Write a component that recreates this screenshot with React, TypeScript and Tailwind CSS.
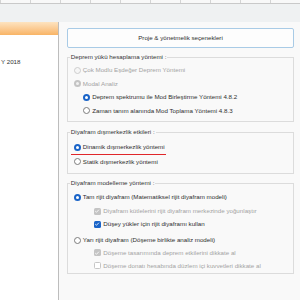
import React from "react";

type Kind = "radio" | "check";

interface OptionProps {
    kind: Kind;
    label: string;
    checked?: boolean;
    disabled?: boolean;
    indent?: string;
    className?: string;
}

const Radio = ({ checked, disabled }: { checked?: boolean; disabled?: boolean }) => {
    if (checked) {
        return (
            <span
                className={`flex h-[7px] w-[7px] shrink-0 items-center justify-center rounded-full ${
                    disabled ? "bg-[#c4c4c4]" : "bg-[#1a64c8]"
                }`}
            >
                <span className={`h-[3px] w-[3px] rounded-full ${disabled ? "bg-[#f1f1f1]" : "bg-white"}`} />
            </span>
        );
    }
    return (
        <span
            className={`h-[7px] w-[7px] shrink-0 rounded-full border ${
                disabled ? "border-[#cdcdcd] bg-[#f6f6f6]" : "border-[#7c7c7c] bg-white"
            }`}
        />
    );
};

const Check = ({ checked, disabled }: { checked?: boolean; disabled?: boolean }) => {
    if (!checked) {
        return <span className="h-[7px] w-[7px] shrink-0 rounded-[1.5px] border border-[#c6c6c6] bg-white" />;
    }
    return (
        <span
            className={`flex h-[7px] w-[7px] shrink-0 items-center justify-center rounded-[1.5px] ${
                disabled ? "bg-[#c4c4c4]" : "bg-[#1a64c8]"
            }`}
        >
            <svg viewBox="0 0 8 8" className="h-[6px] w-[6px]">
                <path d="M1.6 4.1 3.3 5.7 6.5 2.3" fill="none" stroke="white" strokeWidth="1.1" />
            </svg>
        </span>
    );
};

const Option = ({ kind, label, checked, disabled, indent = "", className = "h-[13.5px]" }: OptionProps) => (
    <div className={`flex items-center ${kind === "radio" ? "gap-[2px]" : "gap-[2.5px]"} ${indent} ${className}`}>
        {kind === "radio" ? <Radio checked={checked} disabled={disabled} /> : <Check checked={checked} disabled={disabled} />}
        <span className={`whitespace-nowrap leading-[8px] ${disabled ? "text-[#a3a3a3]" : "text-[#2e2e2e]"}`}>{label}</span>
    </div>
);

const App: React.FC = () => {
    return (
        <div className="flex h-[300px] w-[300px] flex-col overflow-hidden bg-[#eff1f2] font-['Liberation_Sans',sans-serif] text-[6.2px] text-[#333]">
            {/* column header strip */}
            <div className="flex h-[4px] shrink-0 border-b border-[#c9c9c9] bg-[#f8f8f8]">
                <div className="w-[20px] border-r border-[#d4d4d4]" />
                {[0, 1, 2, 3, 4, 5, 6, 7, 8, 9].map((i) => (
                    <div key={i} className="w-[30px] shrink-0 border-r border-[#d4d4d4]" />
                ))}
            </div>
            <div className="h-[18px] shrink-0" />

            <div className="flex min-h-0 flex-1">
                {/* left panel */}
                <div className="w-[59px] shrink-0 border-r border-[#bdbdbd] bg-white">
                    <div className="h-[13px] bg-linear-to-b from-[#fde3c0] to-[#f8b465]" />
                    <div className="mt-[22.5px] pl-[1px] leading-[8px] text-[#333]">Y 2018</div>
                </div>

                {/* right panel */}
                <div className="min-w-0 flex-1 bg-[#f9f9f9] pl-[8px] pr-[6px] pt-[5.5px]">
                    <button
                        type="button"
                        className="flex h-[20px] w-full items-center justify-center rounded-[2px] border border-[#a9cbe6] bg-[#fdfdfd] text-[6.2px] text-[#2e2e2e]"
                    >
                        Proje &amp; yönetmelik seçenekleri
                    </button>

                    <fieldset className="mt-[5.8px] border border-[#dcdcdc] pb-[3.5px] pl-[5.8px] pt-[2px]">
                        <legend className="-ml-[4px] px-[1px] leading-[8px] text-[#333]">Deprem yükü hesaplama yöntemi :</legend>
                        <Option kind="radio" disabled label="Çok Modlu Eşdeğer Deprem Yöntemi" />
                        <Option kind="radio" disabled checked label="Modal Analiz" />
                        <Option kind="radio" checked indent="ml-[9.4px]" label="Deprem spektrumu ile Mod Birleştirme Yöntemi 4.8.2" />
                        <Option kind="radio" indent="ml-[9.4px]" label="Zaman tanım alanında Mod Toplama Yöntemi 4.8.3" />
                    </fieldset>

                    <fieldset className="mt-[6.5px] border border-[#dcdcdc] pb-[5px] pl-[5.8px] pt-[4.5px]">
                        <legend className="-ml-[4px] px-[1px] leading-[8px] text-[#333]">Diyafram dışmerkezlik etkileri :</legend>
                        <Option
                            kind="radio"
                            checked
                            label="Dinamik dışmerkezlik yöntemi"
                            className="-ml-[3px] h-[14px] w-fit border-b-[1.3px] border-[#e0262a] pl-[3px] pr-[1.5px]"
                        />
                        <Option kind="radio" label="Statik dışmerkezlik yöntemi" />
                    </fieldset>

                    <fieldset className="mt-[5px] border border-[#dcdcdc] pb-[1px] pl-[5.8px] pt-[3.7px]">
                        <legend className="-ml-[4px] px-[1px] leading-[8px] text-[#333]">Diyafram modelleme yöntemi :</legend>
                        <Option kind="radio" checked label="Tam rijit diyafram (Matematiksel rijit diyafram modeli)" className="h-[13px]" />
                        <Option
                            kind="check"
                            checked
                            disabled
                            indent="ml-[20px]"
                            label="Diyafram kütlelerini rijit diyafram merkezinde yoğunlaştır"
                            className="mt-[1px] h-[13px]"
                        />
                        <Option kind="check" checked indent="ml-[20px]" label="Düşey yükler için rijit diyaframı kullan" className="h-[13px]" />
                        <Option kind="radio" label="Yarı rijit diyafram (Döşeme birlikte analiz modeli)" className="mt-[3px] h-[12.5px]" />
                        <Option
                            kind="check"
                            checked
                            disabled
                            indent="ml-[20px]"
                            label="Döşeme tasarımında deprem etkilerini dikkate al"
                            className="h-[13px]"
                        />
                        <Option
                            kind="check"
                            disabled
                            indent="ml-[20px]"
                            label="Döşeme donatı hesabında düzlem içi kuvvetleri dikkate al"
                            className="h-[13px]"
                        />
                    </fieldset>
                </div>
            </div>
        </div>
    );
};

export default App;
